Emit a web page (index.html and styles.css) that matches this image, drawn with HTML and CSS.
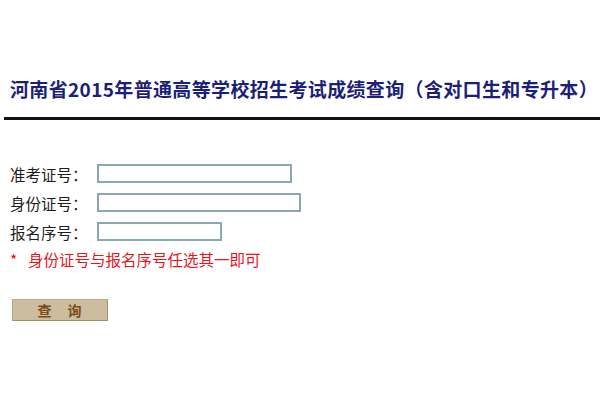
FILE: index.html
```html
<!DOCTYPE html>
<html lang="zh-CN">
<head>
<meta charset="utf-8">
<title>成绩查询</title>
<link rel="stylesheet" href="styles.css">
</head>
<body>
<div class="page">
  <h1 class="title">河南省2015年普通高等学校招生考试成绩查询（含对口生和专升本）</h1>
  <div class="rule"></div>
  <form class="form">
    <div class="row"><label class="label">准考证号：</label><input class="field f1" type="text"></div>
    <div class="row"><label class="label">身份证号：</label><input class="field f2" type="text"></div>
    <div class="row"><label class="label">报名序号：</label><input class="field f3" type="text"></div>
    <div class="note"><span class="star">*</span>身份证号与报名序号任选其一即可</div>
    <div class="actions"><button class="btn" type="button">查　询</button></div>
  </form>
</div>
</body>
</html>
```
FILE: styles.css
```css
html, body {
  margin: 0;
  padding: 0;
  background: #ffffff;
}
.page {
  font-family: "Noto Sans CJK SC", "Noto Sans", sans-serif;
  padding-top: 77px;
}
.title {
  margin: 0;
  padding-left: 10px;
  font-size: 19px;
  line-height: 24px;
  font-weight: bold;
  color: #1b1f7a;
  white-space: nowrap;
  letter-spacing: 0.35px;
}
.rule {
  margin: 16px 0 0 4px;
  height: 3px;
  background: #111111;
}
.form {
  margin: 0;
  padding: 39px 0 0 10px;
  display: flex;
  flex-direction: column;
}
.row {
  display: flex;
  align-items: center;
  height: 29px;
}
.label {
  width: 87px;
  font-size: 15.5px;
  color: #1e1e1e;
}
.field {
  box-sizing: border-box;
  height: 19px;
  margin: 0;
  padding: 0 2px;
  border: 2px solid #8aa8b3;
  background: #ffffff;
  outline: none;
}
.f1 { width: 195px; }
.f2 { width: 204px; }
.f3 { width: 125px; }
.note {
  height: 28px;
  line-height: 26px;
  font-size: 15.5px;
  color: #e8151b;
}
.star {
  display: inline-block;
  width: 18px;
}
.actions {
  padding-top: 23px;
}
.btn {
  box-sizing: border-box;
  margin: 0 0 0 2px;
  width: 96px;
  height: 22px;
  padding: 0;
  border: 1px solid #b5a78a;
  border-right-color: #9e9074;
  border-bottom-color: #9e9074;
  background: #cbbd9e;
  font-family: "Noto Sans CJK SC", sans-serif;
  font-size: 14px;
  line-height: 20px;
  font-weight: bold;
  color: #7a4a1c;
  letter-spacing: 1px;
}
```
